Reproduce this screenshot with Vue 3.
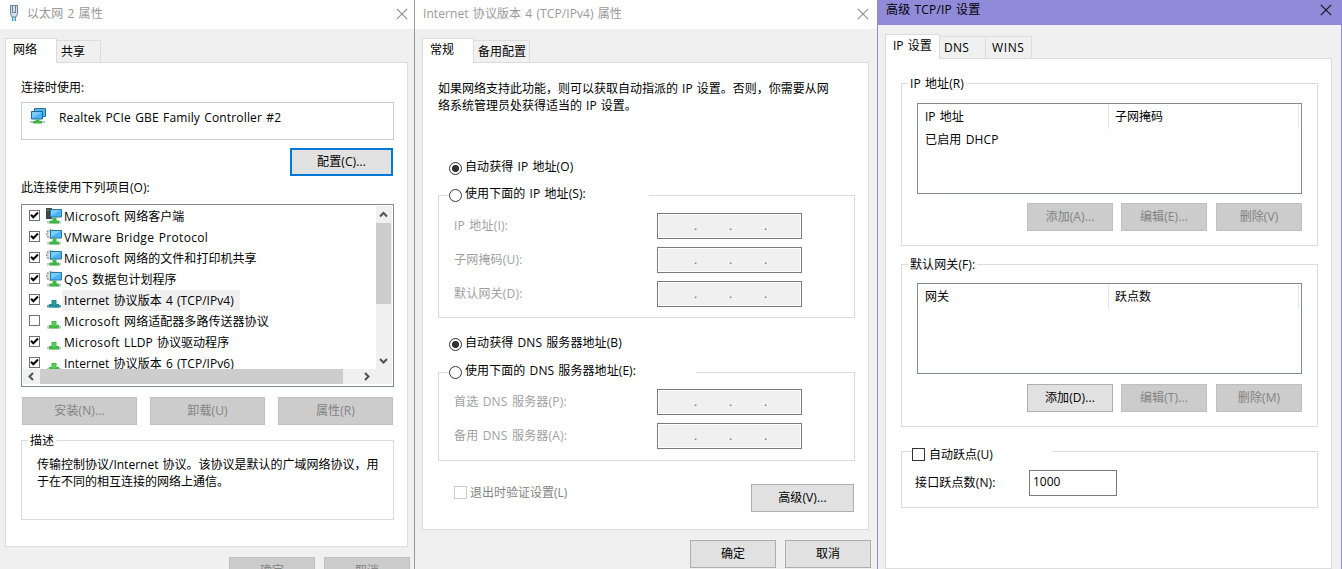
<script setup>
const items = [
  { head: 'Microsoft', text: ' 网络客户端', icon: 'host', checked: true },
  { head: 'VMware Bridge Protocol', text: '', icon: 'gear', checked: true },
  { head: 'Microsoft', text: ' 网络的文件和打印机共享', icon: 'gear', checked: true },
  { head: 'QoS', text: ' 数据包计划程序', icon: 'gear', checked: true },
  { head: '', text: 'Internet 协议版本 4 (TCP/IPv4)', icon: 'proto', checked: true, selected: true },
  { head: 'Microsoft', text: ' 网络适配器多路传送器协议', icon: 'proto', checked: false },
  { head: 'Microsoft', text: ' LLDP 协议驱动程序', icon: 'proto', checked: true },
  { head: '', text: 'Internet 协议版本 6 (TCP/IPv6)', icon: 'proto', checked: true },
]
const ipFields = ['IP 地址(I):', '子网掩码(U):', '默认网关(D):']
const dnsFields = ['首选 DNS 服务器(P):', '备用 DNS 服务器(A):']
</script>

<template>
  <div class="desk">
    <section class="win w1">
      <header class="title">
        <svg class="plug" width="12" height="18" viewBox="0 0 12 18">
          <path d="M4 13h1.400v4H4zM6.600 13H8v4H6.600z" fill="#2fa3dc" />
          <path d="M2.500 1.500h7v8.500l-1.500 3h-4l-1.500-3z" fill="#d5dfe9" stroke="#6f8296" />
          <path d="M4.500 2v6M7.500 2v6M4 8.500h4" stroke="#71859a" fill="none" />
        </svg>
        <span class="grow">以太网 2 属性</span>
        <svg class="x" width="12" height="12" viewBox="0 0 12 12"><path d="M.8.8l10.400 10.400M11.200.8L.8 11.200" /></svg>
      </header>
      <nav class="tabs"><span class="tab on">网络</span><span class="tab t-share">共享</span></nav>
      <main class="panel">
        <div class="line">连接时使用:</div>
        <div class="adapter">
          <svg width="16" height="16" viewBox="0 0 16 16">
            <path d="M4.500.5h11v8h-11z" fill="#4db8f5" stroke="#2c6f9e" />
            <path d="M1.500 3.500h11v7.500h-11z" fill="#48b4fa" stroke="#256797" />
            <path d="M2 4h10L2 10z" fill="#7bcdff" />
            <path d="M0 13h15v2H0z" fill="#c2c6c8" />
            <path d="M5.500 11.500h4V13H12v2.500H3V13h2.500z" fill="#3db648" />
          </svg>
          <span>Realtek PCIe GBE Family Controller #2</span>
        </div>
        <button class="btn w103 focus">配置(C)...</button>
        <div class="line items-label">此连接使用下列项目(O):</div>
        <div class="list">
          <div class="rows">
            <div v-for="it in items" :key="it.head + it.text" class="row">
              <span class="check small">
                <svg v-if="it.checked" width="9" height="9" viewBox="0 0 9 9"><path d="M1 3.800l2.300 2.400L8 1.500" fill="none" stroke="#000" stroke-width="2" /></svg>
              </span>
              <svg class="ricon" width="16" height="16" viewBox="0 0 16 16">
                <template v-if="it.icon === 'proto'">
                  <path d="M1 13h14v2.500H1z" :fill="it.selected ? '#5d9acb' : '#c4c8c8'" />
                  <path d="M5.500 8h5v4H13v3.500H3V12h2.500z" :fill="it.selected ? '#238f91' : '#43b749'" />
                  <path d="M6.500 9h3v4h-3z" :fill="it.selected ? '#2b9c9b' : '#5bcf5b'" />
                </template>
                <template v-else>
                  <path v-if="it.icon === 'host'" d="M0 0h6v11H0z" fill="#3f464c" />
                  <path v-if="it.icon === 'host'" d="M1 2h2" stroke="#49d45a" />
                  <template v-if="it.icon === 'gear'">
                    <circle cx="5" cy="5" r="4.300" fill="#dfe2e4" stroke="#8f959a" stroke-width="1.400" stroke-dasharray="2 1" />
                  </template>
                  <path d="M4.500 1.500h11v7.500h-11z" fill="#46b3fa" stroke="#2d769f" />
                  <path d="M5 2h10L5 8z" fill="#79ccff" />
                  <path d="M1 13h14v2.500H1z" fill="#c4c8c8" />
                  <path d="M6.500 9.500h4v3H13v3H3.500v-3h3z" fill="#3eb647" />
                </template>
              </svg>
              <span class="rtext" :class="{ sel: it.selected }"><span class="head">{{ it.head }}</span>{{ it.text }}</span>
            </div>
          </div>
          <div class="vbar">
            <svg width="15" height="17" viewBox="0 0 15 17"><path d="M4 10.500l3.500-3.500 3.500 3.500" /></svg>
            <i class="vthumb"></i>
            <svg class="end" width="15" height="17" viewBox="0 0 15 17"><path d="M4 7l3.500 3.500L11 7" /></svg>
          </div>
          <div class="hbar">
            <svg width="17" height="15" viewBox="0 0 17 15"><path d="M10 4L6.500 7.500 10 11" /></svg>
            <i class="hthumb"></i>
            <svg class="hend" width="17" height="15" viewBox="0 0 17 15"><path d="M6 4l3.500 3.500L6 11" /></svg>
          </div>
          <div class="corner"></div>
        </div>
        <div class="trio">
          <button class="btn off">安装(N)...</button>
          <button class="btn off">卸载(U)</button>
          <button class="btn off">属性(R)</button>
        </div>
        <div class="group desc">
          <span class="legend">描述</span>
          <p>传输控制协议/Internet 协议。该协议是默认的广域网络协议，用<br />于在不同的相互连接的网络上通信。</p>
        </div>
      </main>
      <footer class="foot f1"><button class="btn off">确定</button><button class="btn off">取消</button></footer>
    </section>

    <section class="win w2">
      <header class="title">
        <span class="grow">Internet 协议版本 4 (TCP/IPv4) 属性</span>
        <svg class="x" width="12" height="12" viewBox="0 0 12 12"><path d="M.8.8l10.400 10.400M11.200.8L.8 11.200" /></svg>
      </header>
      <nav class="tabs"><span class="tab on">常规</span><span class="tab t-alt">备用配置</span></nav>
      <main class="panel">
        <p class="intro">如果网络支持此功能，则可以获取自动指派的 IP 设置。否则，你需要从网<br />络系统管理员处获得适当的 IP 设置。</p>
        <div class="opt o1"><i class="radio dot"></i><span>自动获得 IP 地址(O)</span></div>
        <div class="group g-ip">
          <div class="opt cover"><i class="radio"></i><span>使用下面的 IP 地址(S):</span></div>
          <div v-for="f in ipFields" :key="f" class="field"><label>{{ f }}</label><span class="ip"><b>.</b><b>.</b><b>.</b></span></div>
        </div>
        <div class="opt o2"><i class="radio dot"></i><span>自动获得 DNS 服务器地址(B)</span></div>
        <div class="group g-dns">
          <div class="opt cover wide"><i class="radio"></i><span>使用下面的 DNS 服务器地址(E):</span></div>
          <div v-for="f in dnsFields" :key="f" class="field"><label>{{ f }}</label><span class="ip"><b>.</b><b>.</b><b>.</b></span></div>
        </div>
        <div class="last">
          <span class="check dis"></span><span class="exit">退出时验证设置(L)</span>
          <button class="btn w103">高级(V)...</button>
        </div>
      </main>
      <footer class="foot f2"><button class="btn">确定</button><button class="btn">取消</button></footer>
    </section>

    <section class="win w3">
      <header class="title">
        <span class="grow">高级 TCP/IP 设置</span>
        <svg class="x" width="12" height="12" viewBox="0 0 12 12"><path d="M.8.8l10.400 10.400M11.200.8L.8 11.200" /></svg>
      </header>
      <nav class="tabs"><span class="tab on">IP 设置</span><span class="tab t-dns">DNS</span><span class="tab t-wins">WINS</span></nav>
      <main class="panel">
        <div class="group g-addr">
          <span class="legend">IP 地址(R)</span>
          <div class="table">
            <div class="thead"><span>IP 地址</span><span>子网掩码</span></div>
            <div class="trow">已启用 DHCP</div>
          </div>
          <div class="acts">
            <button class="btn off">添加(A)...</button>
            <button class="btn off">编辑(E)...</button>
            <button class="btn off">删除(V)</button>
          </div>
        </div>
        <div class="group g-gate">
          <span class="legend">默认网关(F):</span>
          <div class="table">
            <div class="thead"><span>网关</span><span>跃点数</span></div>
          </div>
          <div class="acts">
            <button class="btn">添加(D)...</button>
            <button class="btn off">编辑(T)...</button>
            <button class="btn off">删除(M)</button>
          </div>
        </div>
        <div class="group g-metric">
          <div class="auto"><span class="check"></span><span>自动跃点(U)</span></div>
          <div class="metric"><label>接口跃点数(N):</label><span class="num">1000</span></div>
        </div>
      </main>
    </section>
  </div>
</template>

<style>
body { margin: 0; overflow: hidden; }
</style>

<style scoped>
* { box-sizing: border-box; }
.desk {
  display: flex; width: 1342px; height: 569px; overflow: hidden;
  font: 12px/16px "Open Sans", "Noto Sans CJK SC", sans-serif; color: #000; white-space: nowrap; word-spacing: 1px;
}
p { margin: 0; }
svg { display: block; flex: none; }
.win { display: flex; flex-direction: column; flex: none; height: 569px; background: #f0f0f0; overflow: hidden; }
.w1 { width: 415px; border-right: 1px solid #999; }
.w2 { width: 462px; }
.w3 { width: 465px; border: solid #8f8bd8; border-width: 0 1px; }
.title { display: flex; align-items: center; flex: none; height: 29px; padding: 0 6px 2px 8px; background: #fff; color: #999; letter-spacing: .08px; }
.plug { margin: -1px 7px 0 0; }
.grow { flex: 1; padding-top: 1px; }
.x path { stroke: #8c8c8c; stroke-width: 1.100; fill: none; }
.w2 .title { padding-right: 8px; }
.w3 .title { height: 25px; padding: 0 9px 6px 8px; background: #8f8bd8; color: #000; letter-spacing: .15px; }
.w3 .x path { stroke: #111; }

.tabs { display: flex; align-items: flex-end; flex: none; height: 24px; margin: 9px 0 0 5px; }
.w2 .tabs, .w3 .tabs { margin-left: 7px; }
.tab { height: 22px; border: 1px solid #dcdcdc; border-width: 1px 1px 0 0; padding: 3px 0 0 4px; }
.tab.on { position: relative; width: 52px; height: 25px; margin-bottom: -1px; padding: 3px 0 0 7px; background: #fff; border-left-width: 1px; }
.w3 .tab.on { width: 55px; }
.t-share { width: 44px; }
.t-alt { width: 56px; }
.t-dns { width: 46px; letter-spacing: .3px; }
.t-wins { width: 46px; letter-spacing: .6px; }
.tab.t-wins { padding-left: 6px; }
.panel { flex: none; background: #fff; border: 1px solid #dcdcdc; }
.w1 .panel { width: 403px; height: 485px; margin-left: 5px; padding: 17px 13px 0 15px; }
.w2 .panel { width: 447px; height: 468px; margin-left: 7px; padding: 17px 13px 0 15px; }
.w3 .panel { width: 447px; height: 511px; margin-left: 7px; padding: 24px 13px 0 15px; }

.btn {
  display: block; width: 86px; height: 28px; padding: 0; border: 1px solid #adadad; border-radius: 0;
  background: #e1e1e1; color: #000; font: inherit; text-align: center; letter-spacing: .1px;
}
.btn.off { background: #ccc; border-color: #bfbfbf; color: #838383; }
.btn.w103 { width: 103px; }
.btn.focus { margin: 8px 0 0 269px; border: 2px solid #0078d7; }

.adapter { display: flex; height: 38px; margin-top: 6px; padding: 5px 0 0 8px; border: 1px solid #ccc; }
.adapter span { margin: 2px 0 0 13px; letter-spacing: .15px; }
.items-label { margin-top: 4px; letter-spacing: .1px; }
.list {
  display: grid; grid-template: 163px 17px / 353px 16px; width: 373px; height: 183px; margin-top: 8px;
  padding: 1px 1px 0; border: 1px solid #828790; overflow: hidden;
}
.rows { overflow: hidden; }
.row { display: flex; height: 21px; }
.check { width: 13px; height: 13px; border: 1px solid #333; background: #fff; flex: none; }
.check.small { width: 11px; height: 11px; margin: 4px 0 0 6px; border-color: #707070; }
.check.dis { border-color: #ccc; }
.ricon { margin: 2px 0 0 6px; }
.rtext { padding: 3px 6px 2px 2px; letter-spacing: .05px; }
.head { letter-spacing: .33px; }
.sel { background: #f0f0f0; }
.vbar { display: flex; flex-direction: column; background: #f0f0f0; }
.vthumb { width: 15px; height: 81px; background: #cdcdcd; }
.end { margin-top: auto; }
.vbar path, .hbar path { stroke: #505050; stroke-width: 2; fill: none; }
.hbar { display: flex; height: 15px; background: #f0f0f0; }
.hthumb { width: 303px; height: 15px; background: #cdcdcd; }
.hend { margin-left: auto; }
.corner { height: 15px; background: #f0f0f0; }
.trio { display: flex; gap: 13px; margin: 10px 0 0 1px; }
.trio .btn { width: 115px; }
.group { border: 1px solid #dcdcdc; }
.desc { height: 80px; margin-top: 15px; }
.legend { display: block; width: max-content; height: 16px; margin: -8px 0 0 6px; padding: 0 2px; background: #fff; letter-spacing: .1px; }
.desc p { margin: 7px 0 0 15px; line-height: 17px; }
.foot { display: flex; flex: none; margin-top: 10px; }
.f1 { gap: 9px; padding-left: 229px; }
.f2 { gap: 9px; padding-left: 275px; }

.intro { line-height: 17px; }
.opt { display: flex; align-items: center; height: 16px; letter-spacing: .08px; }
.opt span { margin: -2px 0 0 3px; }
.radio { width: 13px; height: 13px; border: 1px solid #333; border-radius: 50%; background: #fff; flex: none; }
.radio.dot { background: radial-gradient(circle, #333 3.200px, #fff 3.900px); }
.o1 { margin: 46px 0 0 11px; }
.g-ip { height: 123px; margin-top: 19px; }
.g-dns { height: 89px; margin-top: 20px; }
.cover { width: 200px; margin: -9px 0 10px 10px; background: linear-gradient(90deg, transparent 7px, #fff 7px); }
.cover.wide { width: 247px; margin-bottom: 9px; }
.field { display: flex; align-items: center; height: 26px; margin: 0 0 8px 15px; color: #a0a0a0; }
.field label { width: 203px; letter-spacing: .2px; }
.ip { display: flex; width: 145px; height: 26px; padding: 2px 0 0 36px; border: 1px solid #7a7a7a; background: #f0f0f0; box-shadow: inset 0 0 0 1px #fff; color: #6d6d6d; }
.ip b { width: 35px; font-weight: 400; line-height: 19px; }
.o2 { margin: 18px 0 0 11px; }
.last { display: flex; margin: 23px 0 0 16px; }
.last .check { margin-top: 2px; }
.exit { margin: 1px 0 0 3px; color: #838383; }
.last .btn { margin-left: auto; margin-right: 1px; }

.table { width: 385px; height: 91px; margin: 11px 0 0 15px; padding: 1px; border: 1px solid #828790; }
.thead { display: flex; height: 24px; line-height: 24px; }
.thead span { width: 190px; padding-left: 6px; border-right: 1px solid #e5e5e5; }
.trow { padding: 3px 0 0 6px; letter-spacing: .15px; }
.acts { display: flex; gap: 8px; margin: 9px 0 0 125px; }
.acts .btn:last-child { margin-left: 1px; }
.g-addr, .g-gate { height: 163px; }
.g-gate { margin-top: 18px; }
.g-gate .table { margin-top: 10px; }
.g-gate .acts { margin-top: 10px; }
.g-metric { height: 57px; margin-top: 24px; }
.auto { display: flex; width: 140px; height: 16px; margin: -5px 0 0 10px; background: #fff; }
.auto .check { margin-top: 1px; }
.auto span + span { margin-left: 4px; }
.metric { display: flex; align-items: center; margin: 7px 0 0 13px; }
.metric label { width: 114px; letter-spacing: .15px; }
.num { width: 88px; height: 26px; padding: 3px 0 0 3px; border: 1px solid #7a7a7a; }
</style>
